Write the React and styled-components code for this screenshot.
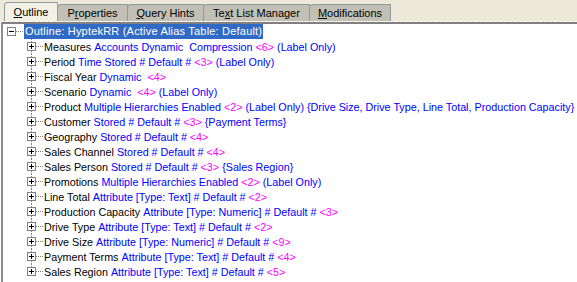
import styled, { createGlobalStyle } from 'styled-components';

const GlobalStyle = createGlobalStyle`
	html, body {
		margin: 0;
		padding: 0;
		background: #fff;
	}
	body {
		font-family: 'Liberation Sans', Arial, sans-serif;
		font-size: 11px;
	}
`;

const tabs = [
	{ label: 'Outline', key: 0, width: 54, active: true },
	{ label: 'Properties', key: 1, width: 71 },
	{ label: 'Query Hints', key: 0, width: 77 },
	{ label: 'Text List Manager', key: 2, width: 107 },
	{ label: 'Modifications', key: 0, width: 82 },
];

const members = [
	['Measures', [['b', 'Accounts Dynamic  Compression '], ['m', '<6>'], ['b', ' (Label Only)']]],
	['Period', [['b', 'Time Stored # Default # '], ['m', '<3>'], ['b', ' (Label Only)']]],
	['Fiscal Year', [['b', 'Dynamic  '], ['m', '<4>']]],
	['Scenario', [['b', 'Dynamic  '], ['m', '<4>'], ['b', ' (Label Only)']]],
	[
		'Product',
		[
			['b', 'Multiple Hierarchies Enabled '],
			['m', '<2>'],
			['b', ' (Label Only) {Drive Size, Drive Type, Line Total, Production Capacity}'],
		],
	],
	['Customer', [['b', 'Stored # Default # '], ['m', '<3>'], ['b', ' {Payment Terms}']]],
	['Geography', [['b', 'Stored # Default # '], ['m', '<4>']]],
	['Sales Channel', [['b', 'Stored # Default # '], ['m', '<4>']]],
	['Sales Person', [['b', 'Stored # Default # '], ['m', '<3>'], ['b', ' {Sales Region}']]],
	['Promotions', [['b', 'Multiple Hierarchies Enabled '], ['m', '<2>'], ['b', ' (Label Only)']]],
	['Line Total', [['b', 'Attribute [Type: Text] # Default # '], ['m', '<2>']]],
	['Production Capacity', [['b', 'Attribute [Type: Numeric] # Default # '], ['m', '<3>']]],
	['Drive Type', [['b', 'Attribute [Type: Text] # Default # '], ['m', '<2>']]],
	['Drive Size', [['b', 'Attribute [Type: Numeric] # Default # '], ['m', '<9>']]],
	['Payment Terms', [['b', 'Attribute [Type: Text] # Default # '], ['m', '<4>']]],
	['Sales Region', [['b', 'Attribute [Type: Text] # Default # '], ['m', '<5>']]],
];

const colors = { b: '#0000ff', m: '#ff00ff', n: '#000' };

const Window = styled.div`
	width: 577px;
	height: 282px;
	overflow: hidden;
	display: flex;
	flex-direction: column;
	background: #fff;
`;

const TabStrip = styled.div`
	display: flex;
	align-items: flex-end;
	height: 21px;
	padding-left: 4px;
	background: #ece9d8;
	border-bottom: 1px dashed #fbfbf7;
`;

const Tab = styled.div`
	box-sizing: border-box;
	width: ${(p) => p.$width}px;
	height: ${(p) => (p.$active ? 19 : 17)}px;
	margin-right: -1px;
	display: flex;
	align-items: center;
	justify-content: center;
	padding-bottom: ${(p) => (p.$active ? 1 : 0)}px;
	border: 1px solid #919b9c;
	border-bottom: none;
	border-top-left-radius: 4px;
	border-top-right-radius: 1px;
	background: ${(p) => (p.$active ? '#f3f1e6' : '#c2c0b4')};
	color: #000;
	white-space: pre;
	position: relative;
	z-index: ${(p) => (p.$active ? 2 : 1)};

	& u {
		text-decoration: underline;
		text-underline-offset: 1px;
	}
`;

const Pane = styled.div`
	flex: 1;
	margin-left: 1px;
	border-top: 2px solid #808080;
	border-left: 2px solid #8c8c8c;
	padding-left: 4px;
	background: #fff;
	font-size: 10.75px;
`;

const Row = styled.div`
	display: flex;
	align-items: center;
	height: 15px;
	padding-left: ${(p) => p.$indent}px;
	white-space: pre;
	color: #000;
`;

const Gutter = styled.div`
	flex: none;
	width: 9px;
	align-self: stretch;
	display: flex;
	align-items: center;
	background-image: ${(p) =>
		p.$line ? 'repeating-linear-gradient(to bottom, #808080 0 1px, transparent 1px 2px)' : 'none'};
	background-repeat: no-repeat;
	background-position: 4px 0;
	background-size: 1px ${(p) => (p.$last ? '50%' : '100%')};
`;

const Connector = styled.div`
	flex: none;
	width: 7px;
	height: 1px;
	margin-right: 1px;
	background-image: repeating-linear-gradient(to right, #808080 0 1px, transparent 1px 2px);
`;

const Name = styled.span`
	flex: none;
	color: ${(p) => p.$color};
`;

const RootLabel = styled.span`
	flex: none;
	background: #316ac5;
	color: #fff;
	padding: 0 1px;
	line-height: 15px;
	font-size: 11px;
	letter-spacing: 0.2px;
`;

const ExpandBox = ({ open }) => (
	<svg width="9" height="9" viewBox="0 0 9 9" shapeRendering="crispEdges">
		<rect x="0.5" y="0.5" width="8" height="8" fill="#fff" stroke="#808080" />
		<line x1="2" y1="4.5" x2="7" y2="4.5" stroke="#000" />
		{!open && <line x1="4.5" y1="2" x2="4.5" y2="7" stroke="#000" />}
	</svg>
);

const TabLabel = ({ label, at }) => (
	<>
		{label.slice(0, at)}
		<u>{label[at]}</u>
		{label.slice(at + 1)}
	</>
);

export default function App() {
	return (
		<>
			<GlobalStyle />
			<Window>
				<TabStrip>
					{tabs.map((t) => (
						<Tab key={t.label} $width={t.width} $active={t.active}>
							<TabLabel label={t.label} at={t.key} />
						</Tab>
					))}
				</TabStrip>
				<Pane>
					<Row $indent={0}>
						<Gutter>
							<ExpandBox open />
						</Gutter>
						<Connector />
						<RootLabel>Outline: HyptekRR (Active Alias Table: Default)</RootLabel>
					</Row>
					{members.map(([name, parts], i) => (
						<Row key={name} $indent={20}>
							<Gutter $line $last={i === members.length - 1}>
								<ExpandBox />
							</Gutter>
							<Connector />
							<Name $color={colors.n}>{name} </Name>
							{parts.map(([kind, text], j) => (
								<Name key={j} $color={colors[kind]}>
									{text}
								</Name>
							))}
						</Row>
					))}
				</Pane>
			</Window>
		</>
	);
}
